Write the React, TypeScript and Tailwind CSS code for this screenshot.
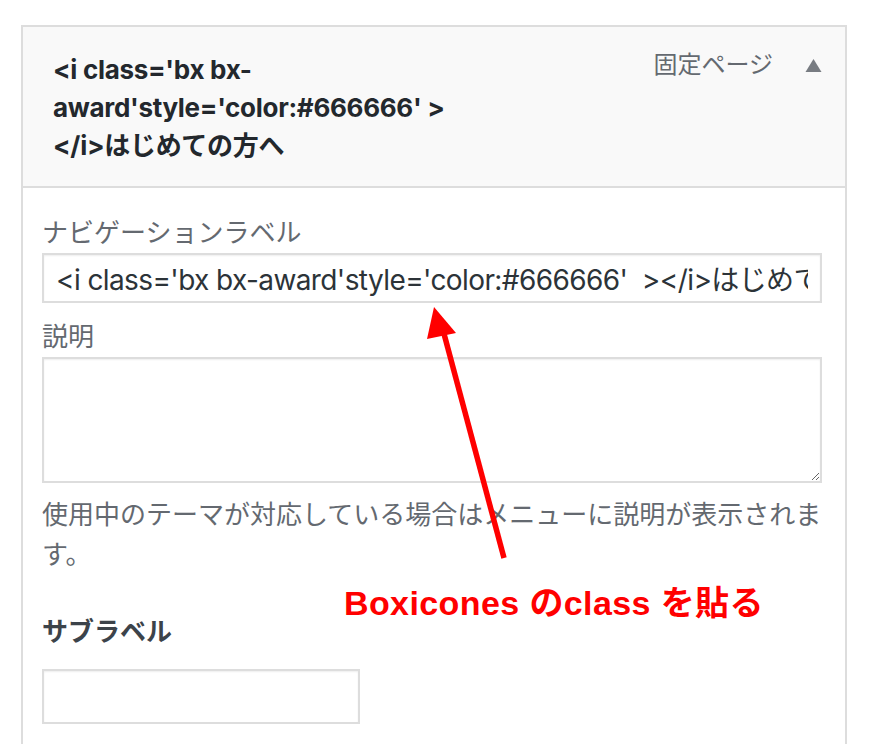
import React from "react";

const ui = "font-['Inter','Noto_Sans_CJK_JP',sans-serif]";

function Arrow() {
  return (
    <svg
      className="absolute left-0 top-0 pointer-events-none"
      width="879"
      height="744"
      viewBox="0 0 879 744"
    >
      <line x1="504" y1="558" x2="443" y2="330" stroke="#ff0000" strokeWidth="5.5" />
      <polygon points="434,307 427,339 456,333" fill="#ff0000" />
    </svg>
  );
}

export default function App() {
  return (
    <div className={`relative w-[879px] h-[744px] overflow-hidden bg-white pl-[21px] pt-[25px] ${ui}`}>
      <div className="w-[826px] h-[760px] border-2 border-[#dddddd] border-b-0">
        <div className="flex justify-between bg-[#f9f9f9] border-b-2 border-[#dddddd] pl-[30px] pr-[23px] pt-[24px] pb-[21px]">
          <div className="text-[26px] leading-[38px] font-bold tracking-[-0.3px] text-[#23282d]">
            &lt;i class='bx bx-
            <br />
            award'style='color:#666666' &gt;
            <br />
            &lt;/i&gt;はじめての方へ
          </div>
          <div className="flex items-center gap-[32px] h-[28px]">
            <span className="text-[24px] leading-[28px] text-[#646970]">固定ページ</span>
            <svg width="17" height="15" viewBox="0 0 17 15">
              <polygon points="8.5,1 16.5,14 0.5,14" fill="#787c82" />
            </svg>
          </div>
        </div>

        <div className="pl-[19px] pr-[23px] pt-[25px]">
          <label className="block text-[26px] leading-[40px] text-[#646970]">ナビゲーションラベル</label>
          <input
            readOnly
            value="<i class='bx bx-award'style='color:#666666'  ></i>はじめての方へ"
            className={`block w-full h-[50px] border-2 border-[#dddddd] bg-white px-[12px] text-[28px] tracking-[-0.6px] text-[#2c3338] shadow-[inset_0_1px_2px_rgba(0,0,0,0.07)] outline-none ${ui}`}
          />

          <label className="block mt-[14px] text-[26px] leading-[40px] text-[#646970]">説明</label>
          <textarea
            readOnly
            className="block w-full h-[126px] border-2 border-[#dddddd] bg-white shadow-[inset_0_1px_2px_rgba(0,0,0,0.07)] outline-none"
          />
          <p className="mt-[12px] text-[26px] leading-[40px] text-[#646970]">
            使用中のテーマが対応している場合はメニューに説明が表示されま
            <br />
            す。
          </p>

          <div className="mt-[37px] text-[26px] leading-[40px] font-bold text-[#3c434a]">サブラベル</div>
          <input
            readOnly
            className="block mt-[17px] w-[318px] h-[55px] border-2 border-[#dddddd] bg-white shadow-[inset_0_1px_2px_rgba(0,0,0,0.07)] outline-none"
          />
        </div>
      </div>

      <Arrow />
      <div className="absolute left-[344px] top-[586px] text-[34px] leading-[34px] font-bold tracking-[0.4px] text-[#ff0000] whitespace-nowrap font-['Liberation_Sans','Noto_Sans_CJK_JP',sans-serif]">
        Boxicones のclass を貼る
      </div>
    </div>
  );
}
